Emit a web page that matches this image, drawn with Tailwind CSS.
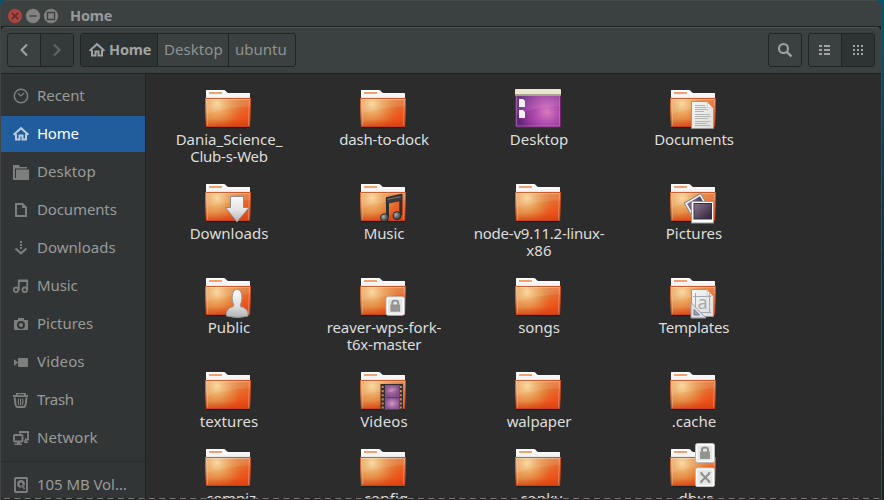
<!DOCTYPE html>
<html lang="en">
<head>
<meta charset="utf-8">
<title>Home</title>
<script src="https://cdn.jsdelivr.net/npm/@tailwindcss/browser@4"></script>
</head>
<body class="w-[884px] h-[500px] overflow-hidden bg-linear-to-b from-[#07566f] via-[#0b3342] to-[#14261e] font-['Noto_Sans','Open_Sans',sans-serif] text-[15px]">
<svg class="absolute w-0 h-0">
  <defs>
    <linearGradient id="gBody" x1="0" y1="0" x2="1" y2="1"><stop offset="0" stop-color="#ee9d63"/><stop offset=".45" stop-color="#e07c38"/><stop offset=".78" stop-color="#ee5119"/><stop offset="1" stop-color="#dc4a18"/></linearGradient>
    <radialGradient id="gGlow" gradientUnits="userSpaceOnUse" cx="13" cy="17" r="25"><stop offset="0" stop-color="#f8d69a"/><stop offset=".4" stop-color="#efb066" stop-opacity=".75"/><stop offset="1" stop-color="#e88a45" stop-opacity="0"/></radialGradient>
    <linearGradient id="gTab" x1="0" y1="0" x2="0" y2="1"><stop offset="0" stop-color="#fff"/><stop offset=".6" stop-color="#f3f3f3"/><stop offset="1" stop-color="#c9c9c9"/></linearGradient>
    <linearGradient id="gLow" x1="0" y1="0" x2="0" y2="1"><stop offset="0" stop-color="#c04010" stop-opacity="0"/><stop offset="1" stop-color="#d23c0c" stop-opacity=".6"/></linearGradient>
    <linearGradient id="gGray" x1="0" y1="0" x2="0" y2="1"><stop offset="0" stop-color="#fafafa"/><stop offset=".55" stop-color="#e2e2e2"/><stop offset="1" stop-color="#b2b2b2"/></linearGradient>
    <linearGradient id="gPaper" x1="0" y1="0" x2="1" y2="1"><stop offset="0" stop-color="#f6f6f4"/><stop offset="1" stop-color="#dcdcda"/></linearGradient>
    <radialGradient id="gPurple" gradientUnits="userSpaceOnUse" cx="33" cy="25" r="29"><stop offset="0" stop-color="#d77cc0"/><stop offset=".35" stop-color="#b651b0"/><stop offset=".75" stop-color="#8c3596"/><stop offset="1" stop-color="#60277a"/></radialGradient>
    <linearGradient id="gPhoto" x1="0" y1="0" x2="1" y2="1"><stop offset="0" stop-color="#8e7590"/><stop offset="1" stop-color="#2b2035"/></linearGradient>
    <radialGradient id="gBall" cx=".35" cy=".35" r=".7"><stop offset="0" stop-color="#b0b0b0"/><stop offset=".6" stop-color="#5c5c5c"/><stop offset="1" stop-color="#333"/></radialGradient>
    <radialGradient id="gFilm"><stop offset="0" stop-color="#d295bd"/><stop offset="1" stop-color="#86518f"/></radialGradient>
  </defs>
  <symbol id="folder" viewBox="0 0 48 44">
    <path d="M2.500 39.800h43v1.400h-43z" fill="#000" opacity=".3"/>
    <path d="M2 14V3.600Q2 3 2.600 3H20c2 0 2.300 3 4.500 3H45.500q.5 0 .5.5V14z" fill="url(#gTab)"/>
    <path d="M5 5h13v2H5z" fill="#f2a170"/>
    <path d="M1 11h46l-1 29H2z" fill="url(#gBody)"/>
    <path d="M1 11h46l-1 29H2z" fill="url(#gGlow)"/>
    <path d="M1 11h46l-.3 8Q25 20 1.500 27z" fill="#fff" opacity=".1"/>
    <path d="M2 32h44v8H2z" fill="url(#gLow)"/>
    <path d="M1.500 11.500h45l-1 28h-43z" fill="none" stroke="#bf4218" stroke-opacity=".75"/>
    <path d="M3.300 38.500L2.600 12.500h42.800l-.8 26" fill="none" stroke="#fff" stroke-opacity=".3"/>
  </symbol>
  <symbol id="lock" viewBox="0 0 20 20">
    <rect x=".5" y=".5" width="19" height="19" rx="2" fill="#fdfdfd" stroke="#b9b9b7"/>
    <rect x="2.500" y="2.500" width="15" height="15" fill="#e6e6e5"/>
    <path d="M7 9.500V6.500q0-2 3-2t3 2V9.500" fill="none" stroke="#8e908c" stroke-width="2"/>
    <rect x="5" y="8.500" width="10" height="7.500" rx=".7" fill="#939591"/>
  </symbol>
  <symbol id="cross" viewBox="0 0 20 20">
    <rect x=".5" y=".5" width="19" height="19" rx="2" fill="#fdfdfd" stroke="#b9b9b7"/>
    <rect x="2.500" y="2.500" width="15" height="15" fill="#e6e6e5"/>
    <path d="M6 6l8.500 8.500M14.500 6L6 14.500" stroke="#8b8d89" stroke-width="2"/><path d="M5 5.500h2.500M13 5.500h2.500M5 15h2.500M13 15h2.500" stroke="#8b8d89"/>
  </symbol>
  <symbol id="home" viewBox="0 0 16 16">
    <path d="M.6 8.800L8 2.200l7.400 6.600" fill="none" stroke="currentColor" stroke-width="2"/>
    <path d="M3 8v5.500h3.500V9.500h3v4H13V8" fill="none" stroke="currentColor" stroke-width="2"/>
  </symbol>
</svg>

<div class="relative w-[882px] h-[500px] flex flex-col bg-[#3b4140] rounded-t-[7px] border-l border-r border-[#404645] overflow-hidden">
  <header class="h-[26px] shrink-0 flex items-center pl-[6px] pt-[4px] border-t border-[#464b4a]">
    <svg class="w-[54px] h-[16px] shrink-0" viewBox="0 0 54 16">
      <g stroke="#2b302f" stroke-opacity=".5" stroke-width=".7"><circle cx="8" cy="8" r="7.400" fill="#a94442"/><circle cx="26" cy="8" r="7.400" fill="#818281"/><circle cx="44" cy="8" r="7.400" fill="#818281"/></g>
      <path d="M4.800 4.800l6.400 6.400M11.200 4.800l-6.400 6.400" stroke="#4d2927" stroke-width="1.300"/><path d="M22.500 8h7" stroke="#444847" stroke-width="1.500"/><rect x="40.500" y="4.500" width="7" height="7" fill="none" stroke="#3b3f3e" stroke-width="1.300"/>
    </svg>
    <span data-w="41.500" class="ml-[9px] pb-[2px] font-bold text-[14.500px] text-[#999b9a] leading-[16px] whitespace-nowrap">Home</span>
  </header>
  <div class="h-[48px] shrink-0 bg-[#1e2221] pt-px">
    <div class="h-[46px] bg-[#3b4140] rounded-t-[5px] border-t border-[#505554] flex items-start pt-[5px] pl-[6px] pr-[6px] text-[#8f9291]">
      <div class="flex w-[67px] h-[34px] rounded-[3px] border border-[#202423] overflow-hidden">
        <div class="w-[33px] border-r border-[#202423] flex items-center justify-center"><svg class="size-4" viewBox="0 0 16 16"><path d="M11 2.500L5.500 8l5.500 5.500" fill="none" stroke="#a1a4a3" stroke-width="2"/></svg></div>
        <div class="flex-1 bg-[#343939] flex items-center justify-center"><svg class="size-4" viewBox="0 0 16 16"><path d="M5 2.500L10.500 8 5 13.500" fill="none" stroke="#626867" stroke-width="2"/></svg></div>
      </div>
      <div class="ml-[6px] flex w-[216px] h-[34px] rounded-[3px] border border-[#202423] overflow-hidden">
        <div class="w-[77px] border-r border-[#202423] bg-[#2e3333] flex items-center pl-[8px] text-[#a1a4a3] font-bold text-[14.500px]"><svg class="size-4 shrink-0"><use href="#home"/></svg><span data-w="41.500" class="ml-[4px] whitespace-nowrap">Home</span></div>
        <div class="w-[71px] border-r border-[#202423] flex items-center pl-[6px]"><span data-w="58" class="pb-[2px] whitespace-nowrap">Desktop</span></div>
        <div class="flex-1 flex items-center pl-[6px]"><span data-w="51" class="pb-[2px] whitespace-nowrap">ubuntu</span></div>
      </div>
      <div class="ml-auto w-[34px] h-[34px] rounded-[3px] border border-[#202423] flex items-center justify-center"><svg class="size-4" viewBox="0 0 16 16"><circle cx="6.500" cy="6.500" r="4.500" fill="none" stroke="#a1a4a3" stroke-width="2"/><path d="M9.800 9.800l4.700 4.700" stroke="#a1a4a3" stroke-width="2.400"/></svg></div>
      <div class="ml-[6px] flex w-[67px] h-[34px] rounded-[3px] border border-[#202423] overflow-hidden">
        <div class="w-[33px] border-r border-[#202423] flex items-center justify-center"><svg class="w-3 h-3" viewBox="0 0 12 12" shape-rendering="crispEdges" fill="#a1a4a3"><path d="M0 1h3v2H0zM5 1h6v2H5zM0 5h3v2H0zM5 5h6v2H5zM0 9h3v2H0zM5 9h6v2H5z"/></svg></div>
        <div class="flex-1 bg-[#2e3333] flex items-center justify-center"><svg class="w-3 h-3" viewBox="0 0 12 12" shape-rendering="crispEdges" fill="#a1a4a3"><path d="M1 1h2v2H1zM5 1h2v2H5zM9 1h2v2H9zM1 5h2v2H1zM5 5h2v2H5zM9 5h2v2H9zM1 9h2v2H1zM5 9h2v2H5zM9 9h2v2H9z"/></svg></div>
      </div>
    </div>
  </div>
  <div class="flex h-[426px]">
    <nav id="side" class="w-[145px] shrink-0 bg-[#313535] border-r border-[#1f2322] pt-[4px] flex flex-col gap-[2px] text-[#999b9a]"></nav>
    <main id="files" class="flex-1 bg-[#2c2c2c] pl-[5px] pt-[13px] grid grid-cols-[repeat(4,155px)] grid-rows-[94px_94px_94px_77px_94px] overflow-hidden text-[#dededc]"></main>
  </div>
  <div class="absolute left-0 top-[498px] w-[880px] h-[2px] bg-[#2a2627]">
    <svg class="block w-[880px] h-[2px]"><path d="M3 .5H880" stroke="#747473" stroke-dasharray="6 4.350"/></svg>
  </div>
</div>

<script>
const side = [
  ['Recent', 47, '<circle cx="8" cy="8" r="6.700" fill="none" stroke="currentColor" stroke-width="1.500"/><path d="M5 5.300l2.800 2.700 3.400-3" fill="none" stroke="currentColor" stroke-width="1.200"/>'],
  ['Home', 41, '<use href="#home"/>'],
  ['Desktop', 58, '<path d="M0 1h6l1 2h7v1.500H2V15H0z" fill="currentColor"/><path d="M3 5.500h13V16H3z" fill="currentColor"/><path d="M0 14h4v2H0z" fill="currentColor"/>'],
  ['Documents', 79, '<path d="M3 2h6.500L13 5.500V14H3z" fill="none" stroke="currentColor" stroke-width="2"/><path d="M9 1v5h5z" fill="currentColor"/>'],
  ['Downloads', 78, '<path d="M7 1h2v2H7zM7 4h2v2H7zM7 7h2v2H7z" fill="currentColor"/><path d="M2.500 8.500L8 13.300l5.500-4.800" fill="none" stroke="currentColor" stroke-width="2.200"/>'],
  ['Music', 40, '<circle cx="3" cy="11.800" r="2.300" fill="none" stroke="currentColor" stroke-width="1.800"/><circle cx="11.800" cy="11.800" r="2.300" fill="none" stroke="currentColor" stroke-width="1.800"/><path d="M5.800 12V2.500H14.200V12" fill="none" stroke="currentColor" stroke-width="1.800"/><path d="M5 2h10v2H5z" fill="currentColor"/>'],
  ['Pictures', 55.5, '<path fill-rule="evenodd" d="M5 2h6v2h3q1 0 1 1v8q0 1-1 1H2q-1 0-1-1V5q0-1 1-1h3zM8 5a4 4 0 100 8 4 4 0 000-8z" fill="currentColor"/><circle cx="8" cy="9" r="2" fill="currentColor"/>'],
  ['Videos', 47, '<path d="M6 4h8q1 0 1 1v7q0 1-1 1H6q-1 0-1-1V5q0-1 1-1zM1 5l4 3.500L1 12z" fill="currentColor"/>'],
  ['Trash', 36, '<path d="M0 3h3V1h10v2h2v2H0zM4.500 2.300v.9h6.500v-.9z" fill-rule="evenodd" fill="currentColor"/><path d="M1.500 5.500L2 8q.2 6 2 7h7q2-1 2.200-7l.3-2.500" fill="none" stroke="currentColor" stroke-width="2"/><path d="M5.700 6.500q-1 3 .3 6.500M7.600 6.500V13M9.500 6.500q1 3-.3 6.500" fill="none" stroke="currentColor" stroke-width="1.100"/>'],
  ['Network', 60, '<path d="M7 3.500V2h8v7.500h-3" fill="none" stroke="currentColor" stroke-width="1.800"/><rect x="1" y="5" width="8.500" height="6.500" rx=".8" fill="none" stroke="currentColor" stroke-width="1.900"/><path d="M4 12h3v1.500h2V15H1.500v-1.500H4zM11.500 10h2v1.500H15V13h-4z" fill="currentColor"/>'],
  ['105 MB Vol…', 89, '<rect x="2" y="1" width="12" height="14" rx=".8" fill="none" stroke="currentColor" stroke-width="1.900"/><circle cx="8" cy="6.800" r="3.900" fill="currentColor"/><path d="M7.300 6.300l4 5.500" stroke="#313535" stroke-width="2.600"/><circle cx="8" cy="6.800" r="1.100" fill="#313535"/><path d="M8.800 8l2.700 4" stroke="currentColor" stroke-width="1.500"/>']
];
document.getElementById('side').innerHTML = side.map(([t, w, g], i) => `
  ${i === 10 ? '<div class="h-px mt-[3px] mb-[3px] bg-[#282c2b] shrink-0"></div>' : ''}
  <div class="${i === 1 ? 'bg-[#215d9c] text-white' : ''} h-[36px] shrink-0 flex items-center pl-[12px] gap-[8px]">
    <svg class="size-4 shrink-0 ${i === 1 ? 'text-[#b9cce2]' : 'text-[#7d7f7e]'}" viewBox="0 0 16 16">${g}</svg>
    <span data-w="${w}" class="pb-[2px] whitespace-nowrap">${t}</span>
  </div>`).join('');

const F = '<use href="#folder" width="48" height="44"/>';
const lines = (a) => a.map(([x, y, w]) => `<path d="M${x} ${y}h${w}" stroke="#b5b5b3"/>`).join('');
const perf = [0, 1, 2, 3, 4, 5].map(i => `<path d="M22.700 ${17 + i * 4.1}h2v2.100h-2zM40.800 ${17 + i * 4.1}h2v2.100h-2z" fill="#d98558"/>`).join('');
const art = {
  desktop: '<rect x="1.500" y="3" width="45" height="37" rx="1" fill="url(#gPurple)" stroke="#74226f"/><path d="M2.500 9h43v10Q20 20 2.500 28z" fill="#fff" opacity=".09"/><path d="M2.500 9v30h43V9" fill="none" stroke="#d48ad0" stroke-opacity=".45"/><rect x="1" y="2" width="46" height="6.500" rx="1" fill="#e9e6d0"/><path d="M1 7h46v1.500H1z" fill="#a9a68c"/><path d="M5 12h4l2 2v6H5zM5 23h4l2 2v6H5z" fill="#f4eff4"/>',
  doc: F + '<path d="M22.500 14.500h15l7 7v20h-22z" fill="url(#gPaper)" stroke="#979894"/><path d="M37.500 14.500q2 3 .5 6 4-1 6.500 1z" fill="#fff" stroke="#bdbdba" stroke-width=".7"/>' + lines([[26, 18.5, 10], [26, 20.5, 11], [26, 22.5, 13], [26, 24.5, 9], [26, 27.5, 15], [26, 29.5, 16], [26, 31.5, 13], [26, 34.5, 15], [26, 36.5, 12], [26, 38.5, 15]]),
  down: F + '<path d="M26.500 15.500h13v11h5.500L33 41 21.500 26.500h5z" fill="url(#gGray)" stroke="#8c8c8a"/>',
  music: F + '<path d="M28.500 36V17.500L41.800 14.500V34" fill="none" stroke="#2e2e2e" stroke-width="3"/><path d="M27.300 17l15.500-3v5.500l-15.500 3z" fill="#3c3c3c" stroke="#262626" stroke-width=".6"/><path d="M28.500 18.200l13-2.500" stroke="#777"/><circle cx="25.500" cy="36.700" r="4" fill="url(#gBall)" stroke="#2b2b2b"/><circle cx="38" cy="34.700" r="4" fill="url(#gBall)" stroke="#2b2b2b"/>',
  pics: F + '<g transform="rotate(-30 28 25)"><rect x="18.500" y="16" width="19" height="20" fill="#f4f4f4" stroke="#8a8a86"/><rect x="20.500" y="18" width="15" height="15" fill="url(#gPhoto)"/></g><rect x="22.500" y="20.500" width="22" height="21.500" fill="#fff" stroke="#9a9a97"/><rect x="25" y="22.500" width="17.500" height="15.500" fill="url(#gPhoto)" stroke="#3a2f40"/>',
  pub: F + '<path d="M22.500 41V38q.5-5 7-6.500.8-1.500-.8-4.500-1.200-4-.2-8 1-4.500 4.500-4.500t4.500 4.500q1 4-.2 8-1.600 3-.8 4.500 6.500 1.500 7.500 6.500v3q-10 3-21.500 0z" fill="url(#gGray)" stroke="#989896"/>',
  locked: F + '<use href="#lock" x="26.500" y="21" width="19.500" height="20"/>',
  tmpl: F + '<path d="M22.500 14.500h15l7 7v20h-22z" fill="url(#gPaper)" stroke="#979894"/><path d="M37.500 14.500q2 3 .5 6 4-1 6.500 1z" fill="#fff" stroke="#bdbdba" stroke-width=".7"/><path d="M24 21.500h18M26.500 18v22M40.500 18v20M28 37.500h14" stroke="#a6a8b5"/><text x="28.500" y="34" font-family="Noto Sans" font-size="18" style="letter-spacing:0" fill="#a6a8b5">a</text><path d="M22 27.500v15.500h15z" fill="#dfe1e8" fill-opacity=".9" stroke="#9d9fac"/><path d="M25 34.500v5.500h5.500z" fill="#9d9fac" stroke="#777a88"/>',
  film: F + '<rect x="21.500" y="15" width="22.500" height="26" fill="#2f2d2e"/>' + perf + '<rect x="26" y="16" width="14.500" height="12" fill="url(#gFilm)"/><rect x="26" y="28.500" width="14.500" height="12" fill="url(#gFilm)"/><path d="M26 25q8-3 14.500-5v7H26z" fill="#75477f" opacity=".4"/>',
  dbus: F + '<use href="#lock" x="26" y="-3" width="20" height="20"/><use href="#cross" x="26" y="21.300" width="20" height="20"/>',
  folder: F
};
const files = [
  ['folder', ['Dania_Science_', 106], ['Club-s-Web', 77]], ['folder', ['dash-to-dock', 89]], ['desktop', ['Desktop', 58]], ['doc', ['Documents', 79]],
  ['down', ['Downloads', 78]], ['music', ['Music', 40]], ['folder', ['node-v9.11.2-linux-', 130], ['x86', 25]], ['pics', ['Pictures', 56]],
  ['pub', ['Public', 42]], ['locked', ['reaver-wps-fork-', 114], ['t6x-master', 74]], ['folder', ['songs', 41]], ['tmpl', ['Templates', 70]],
  ['folder', ['textures', 58]], ['film', ['Videos', 47]], ['folder', ['walpaper', 64]], ['folder', ['.cache', 44]],
  ['folder', ['.compiz', 53]], ['folder', ['.config', 48]], ['folder', ['.conky', 46]], ['dbus', ['.dbus', 38]]
];
document.getElementById('files').innerHTML = files.map(([k, ...t]) => `
  <div class="flex flex-col items-center">
    <svg class="w-[48px] h-[44px] mr-px shrink-0 overflow-visible" viewBox="0 0 48 44">${art[k]}</svg>
    ${t.map(([s, w]) => `<div class="h-[17px] pl-px leading-[17px] whitespace-nowrap"><span data-w="${w}">${s}</span></div>`).join('')}
  </div>`).join('');

// Spread each label's letters so that it takes its nominal width.
function fit() {
  document.querySelectorAll('[data-w]').forEach(e => {
    const n = e.textContent.length, target = parseFloat(e.dataset.w) + 0.7;
    let s = 0.01;
    e.style.letterSpacing = s + 'px';
    for (let k = 0; k < 4; k++) {
      s += (target - e.getBoundingClientRect().width) / n;
      e.style.letterSpacing = s.toFixed(3) + 'px';
    }
  });
}
fit();
window.addEventListener('load', fit);
document.fonts.ready.then(fit);
</script>
</body>
</html>
